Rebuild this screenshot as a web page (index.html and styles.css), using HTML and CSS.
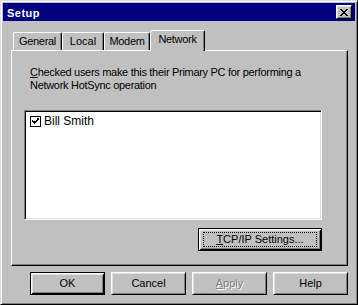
FILE: index.html
```html
<!DOCTYPE html>
<html>
<head>
<meta charset="utf-8">
<link rel="stylesheet" href="styles.css">
</head>
<body>
<div class="window">
  <div class="titlebar">
    <span class="title">Setup</span>
    <span class="close">
      <svg width="8" height="7" viewBox="0 0 8 7" shape-rendering="crispEdges">
        <path fill="#000" d="M0 0h2v1h-2zM6 0h2v1h-2zM1 1h2v1h-2zM5 1h2v1h-2zM2 2h4v1h-4zM3 3h2v1h-2zM2 4h4v1h-4zM1 5h2v1h-2zM5 5h2v1h-2zM0 6h2v1h-2zM6 6h2v1h-2z"/>
      </svg>
    </span>
  </div>
  <div class="body">
    <div class="tabs">
      <div class="tab t-general">General</div>
      <div class="tab t-local">Local</div>
      <div class="tab t-modem">Modem</div>
      <div class="tab t-network active">Network</div>
    </div>
    <div class="panel">
      <p class="desc"><u>C</u>hecked users make this their Primary PC for performing a<br>Network HotSync operation</p>
      <div class="listbox">
        <div class="item">
          <svg class="check" width="11" height="11" viewBox="0 0 11 11" shape-rendering="crispEdges">
            <rect x="0.5" y="0.5" width="10" height="10" fill="#fff" stroke="#000"/>
            <path fill="#000" d="M8 2h1v1h-1zM7 3h2v1h-2zM6 4h2v1h-2zM2 4h1v1h-1zM2 5h5v1h-5zM3 6h3v1h-3zM4 7h1v1h-1zM7 2h1v2h-1z"/>
          </svg>
          <span>Bill Smith</span>
        </div>
      </div>
      <div class="panel-actions">
        <div class="btn default tcp"><span class="focus"><u>T</u>CP/IP Settings...</span></div>
      </div>
    </div>
    <div class="buttons">
      <div class="btn default">OK</div>
      <div class="btn">Cancel</div>
      <div class="btn disabled"><span><u>A</u>pply</span></div>
      <div class="btn">Help</div>
    </div>
  </div>
</div>
</body>
</html>
```
FILE: styles.css
```css
* { box-sizing: border-box; }
html, body { margin: 0; padding: 0; background: #c0c0c0; }
body {
  font-family: "Liberation Sans", Arial, sans-serif;
  font-size: 11px;
  line-height: 13px;
  color: #000;
}
.window {
  width: 358px;
  height: 305px;
  background: #c0c0c0;
  border: 1px solid;
  border-color: #dfdfdf #000 #000 #dfdfdf;
  box-shadow: inset 1px 1px #fff, inset -1px -1px #808080;
  padding: 2px;
  display: flex;
  flex-direction: column;
}
.titlebar {
  height: 18px;
  background: #000080;
  display: flex;
  align-items: flex-start;
  justify-content: space-between;
  padding: 2px 3px 0 4px;
}
.title {
  color: #fff;
  font-weight: bold;
  line-height: 14px;
  margin-top: 1px;
  letter-spacing: 0.5px;
}
.close {
  width: 16px;
  height: 14px;
  background: #c0c0c0;
  border: 1px solid;
  border-color: #fff #000 #000 #fff;
  box-shadow: inset 1px 1px #dfdfdf, inset -1px -1px #808080;
  display: flex;
  align-items: center;
  justify-content: center;
  padding-right: 1px;
}
.close svg { display: block; }
.body {
  flex: 1;
  padding: 9px 7px 0 8px;
  display: flex;
  flex-direction: column;
}
.tabs {
  height: 20px;
  display: flex;
  align-items: flex-end;
  padding-left: 2px;
}
.tab {
  height: 18px;
  border-top: 1px solid #fff;
  border-left: 1px solid #fff;
  border-right: 1px solid #000;
  border-top-left-radius: 2px;
  border-top-right-radius: 2px;
  box-shadow: inset -1px 0 #808080;
  padding-top: 2px;
  text-align: center;
  white-space: nowrap;
  letter-spacing: -0.3px;
}
.t-general { width: 49px; }
.t-local { width: 42px; letter-spacing: 0; }
.t-modem { width: 46px; }
.t-network { width: 55px; }
.tab.active {
  height: 21px;
  margin-bottom: -1px;
  background: #c0c0c0;
  position: relative;
  z-index: 1;
  padding-top: 2px;
}
.panel {
  width: 337px;
  height: 216px;
  border: 1px solid;
  border-color: #fff #000 #000 #fff;
  box-shadow: inset -1px -1px #808080;
  padding: 15px 25px 0 12px;
  display: flex;
  flex-direction: column;
}
.desc {
  margin: 0 0 18px 6px;
  letter-spacing: -0.3px;
  white-space: nowrap;
}
.desc u, .btn u { text-decoration: underline; text-underline-offset: 1px; }
.listbox {
  width: 298px;
  height: 110px;
  background: #fff;
  border: 1px solid;
  border-color: #808080 #fff #fff #808080;
  box-shadow: inset 1px 1px #000, inset -1px -1px #dfdfdf;
  padding: 4px 3px;
}
.item {
  display: flex;
  align-items: center;
  gap: 3px;
  padding-left: 2px;
  font-size: 12px;
  line-height: 13px;
}
.check { display: block; }
.panel-actions {
  display: flex;
  justify-content: flex-end;
  margin-top: 8px;
}
.btn {
  width: 75px;
  height: 23px;
  background: #c0c0c0;
  border: 1px solid;
  border-color: #fff #000 #000 #fff;
  box-shadow: inset 1px 1px #dfdfdf, inset -1px -1px #808080;
  display: flex;
  align-items: center;
  justify-content: center;
}
.btn.default {
  border-color: #000;
  box-shadow: inset 1px 1px #fff, inset -1px -1px #000, inset 2px 2px #dfdfdf, inset -2px -2px #808080;
}
.tcp {
  width: 124px;
  padding: 3px 4px 3px 4px;
}
.focus {
  flex: 1;
  align-self: stretch;
  border: 1px dotted #000;
  display: flex;
  align-items: center;
  justify-content: center;
}
.disabled span {
  color: #808080;
  text-shadow: 1px 1px #fff;
}
.buttons {
  display: flex;
  justify-content: flex-end;
  gap: 6px;
  margin-top: 6px;
}
```
